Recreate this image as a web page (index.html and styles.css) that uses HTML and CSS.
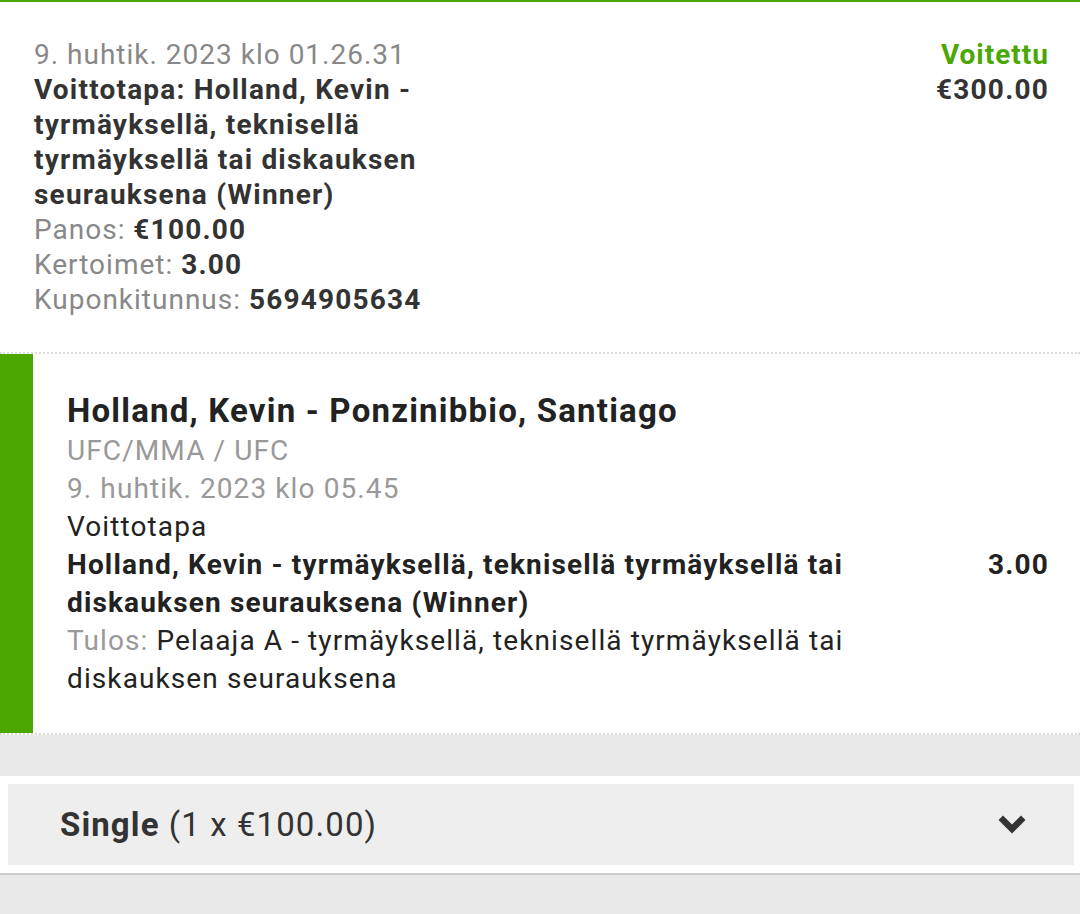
FILE: index.html
```html
<!DOCTYPE html>
<html lang="fi">
<head>
<meta charset="utf-8">
<title>Kuponki</title>
<link rel="stylesheet" href="styles.css">
</head>
<body>
<div class="ticket">
  <div class="summary">
    <div class="summary-left">
      <div class="muted">9. huhtik. 2023 klo 01.26.31</div>
      <div class="strong">Voittotapa: Holland, Kevin - tyrmäyksellä, teknisellä tyrmäyksellä tai diskauksen seurauksena (Winner)</div>
      <div><span class="muted">Panos: </span><span class="strong">€100.00</span></div>
      <div><span class="muted">Kertoimet: </span><span class="strong">3.00</span></div>
      <div><span class="muted">Kuponkitunnus: </span><span class="strong">5694905634</span></div>
    </div>
    <div class="summary-right">
      <div class="status">Voitettu</div>
      <div class="strong">€300.00</div>
    </div>
  </div>
  <div class="event">
    <div class="event-bar"></div>
    <div class="event-body">
      <div class="event-title">Holland, Kevin - Ponzinibbio, Santiago</div>
      <div class="muted2">UFC/MMA / UFC</div>
      <div class="muted2">9. huhtik. 2023 klo 05.45</div>
      <div>Voittotapa</div>
      <div class="sel-row">
        <div class="sel-text">Holland, Kevin - tyrmäyksellä, teknisellä tyrmäyksellä tai diskauksen seurauksena (Winner)</div>
        <div class="odds">3.00</div>
      </div>
      <div class="result"><span class="muted2">Tulos:</span> Pelaaja A - tyrmäyksellä, teknisellä tyrmäyksellä tai diskauksen seurauksena</div>
    </div>
  </div>
</div>
<div class="footer">
  <div class="bet-type">
    <div class="bet-label"><b>Single</b> (1 x €100.00)</div>
    <svg class="chevron" width="28" height="19" viewBox="0 0 28 19"><polygon points="0.5,5 5,0.5 14,9.5 23,0.5 27.5,5 14,18.5" fill="#333"/></svg>
  </div>
</div>
</body>
</html>
```

FILE: styles.css
```css
html, body {
  margin: 0;
  padding: 0;
}
body {
  background: #e8e8e8;
  font-family: Roboto, "Liberation Sans", Arial, sans-serif;
  font-size: 28px;
  letter-spacing: 1px;
  color: #333;
}
.ticket {
  background: #fff;
  border-top: 2px solid #4ba803;
}
.summary {
  display: flex;
  justify-content: space-between;
  padding: 35px 31px 35px 34px;
  line-height: 35px;
}
.summary-left {
  width: 412px;
}
.summary-right {
  text-align: right;
}
.muted {
  color: #888;
}
.muted2 {
  color: #999;
}
.strong {
  font-weight: 700;
  letter-spacing: 1.2px;
  color: #333;
}
.status {
  color: #4ba803;
  font-weight: 700;
}
.event {
  display: flex;
  border-top: 2px dotted #dcdcdc;
  border-bottom: 2px dotted #dcdcdc;
  color: #222;
}
.event-bar {
  width: 33px;
  background: #4ba803;
  flex: none;
}
.event-body {
  flex: 1;
  padding: 35px 31px 35px 34px;
  line-height: 38px;
  letter-spacing: 1.1px;
}
.event-title {
  font-size: 33px;
  letter-spacing: 1.2px;
  font-weight: 700;
  line-height: 43px;
}
.sel-row {
  display: flex;
  justify-content: space-between;
  font-weight: 700;
  letter-spacing: 1.15px;
}
.sel-text {
  max-width: 880px;
}
.result {
  max-width: 880px;
}
.footer {
  margin-top: 41px;
  background: #fff;
  padding: 8px 6px 8px 8px;
  border-bottom: 2px solid #cccccc;
}
.bet-type {
  display: flex;
  align-items: center;
  justify-content: space-between;
  height: 81px;
  background: #eeeeee;
  padding: 0 48px 0 52px;
  font-size: 33px;
  letter-spacing: 1.1px;
  color: #333;
}
.bet-label b {
  font-weight: 700;
}
.chevron {
  display: block;
}
```
